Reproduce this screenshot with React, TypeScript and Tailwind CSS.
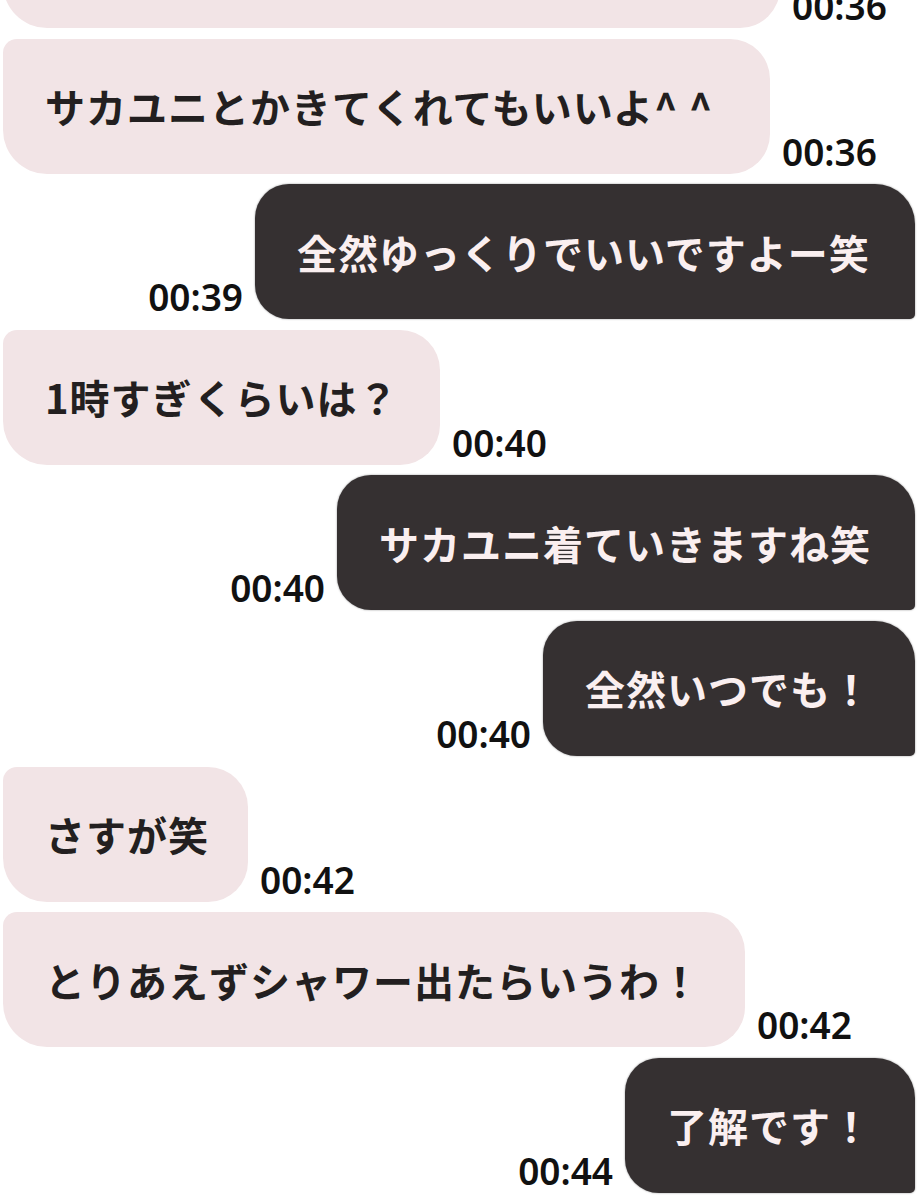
import React from 'react';

type Message = {
  id: number;
  mine: boolean;
  text: string;
  time: string;
  width: string;
};

const messages: Message[] = [
  { id: 1, mine: false, text: '', time: '00:36', width: 'w-[777px]' },
  { id: 2, mine: false, text: 'サカユニとかきてくれてもいいよ^ ^', time: '00:36', width: 'w-[767px]' },
  { id: 3, mine: true, text: '全然ゆっくりでいいですよー笑', time: '00:39', width: 'w-[660px]' },
  { id: 4, mine: false, text: '1時すぎくらいは？', time: '00:40', width: 'w-[437px]' },
  { id: 5, mine: true, text: 'サカユニ着ていきますね笑', time: '00:40', width: 'w-[578px]' },
  { id: 6, mine: true, text: '全然いつでも！', time: '00:40', width: 'w-[372px]' },
  { id: 7, mine: false, text: 'さすが笑', time: '00:42', width: 'w-[245px]' },
  { id: 8, mine: false, text: 'とりあえずシャワー出たらいうわ！', time: '00:42', width: 'w-[742px]' },
  { id: 9, mine: true, text: '了解です！', time: '00:44', width: 'w-[290px]' },
];

function Time({ value }: { value: string }) {
  return (
    <span
      className="mb-[4px] shrink-0 text-[37px] leading-none font-semibold text-[#111]"
      style={{ fontFamily: '"Noto Sans", "Liberation Sans", sans-serif' }}
    >
      {value}
    </span>
  );
}

function Bubble({ msg }: { msg: Message }) {
  const base = `flex h-[135px] shrink-0 items-center pl-[42px] text-[40px] leading-none font-bold tracking-[1px] whitespace-nowrap ${msg.width}`;
  if (msg.mine) {
    return (
      <div
        className={`${base} rounded-tl-[34px] rounded-bl-[34px] rounded-tr-[40px] rounded-br-[5px] bg-[#353031] text-[#faeff0] shadow-[0_0_2px_rgba(0,0,0,0.45)]`}
      >
        {msg.text}
      </div>
    );
  }
  return (
    <div
      className={`${base} rounded-tl-[14px] rounded-bl-[44px] rounded-tr-[40px] rounded-br-[40px] bg-[#f2e4e6] text-[#231f20]`}
    >
      {msg.text}
    </div>
  );
}

export default function App() {
  return (
    <div
      className="h-[1200px] w-[924px] overflow-hidden bg-white"
      style={{ fontFamily: '"Noto Sans CJK JP", "Noto Sans", sans-serif' }}
    >
      <div className="mt-[-107px] flex flex-col gap-[10.6px] pl-[3px] pr-[9px]">
        {messages.map((msg) =>
          msg.mine ? (
            <div key={msg.id} className="flex items-end justify-end gap-[12px]">
              <Time value={msg.time} />
              <Bubble msg={msg} />
            </div>
          ) : (
            <div key={msg.id} className="flex items-end justify-start gap-[12px]">
              <Bubble msg={msg} />
              <Time value={msg.time} />
            </div>
          )
        )}
      </div>
    </div>
  );
}
